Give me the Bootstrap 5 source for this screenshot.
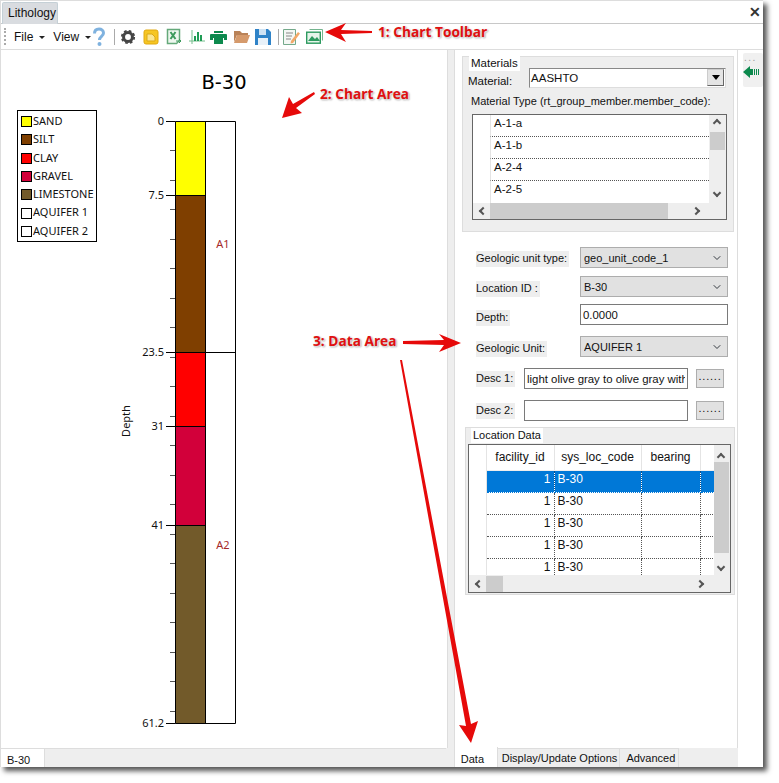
<!DOCTYPE html>
<html lang="en">
<head>
<meta charset="utf-8">
<title>Lithology</title>
<link rel="stylesheet" href="https://cdn.jsdelivr.net/npm/bootstrap@5.3.0/dist/css/bootstrap.min.css">
<style>
html,body{background:#fff;margin:0;height:783px;overflow:hidden}
body{font-family:"Liberation Sans",Arial,sans-serif;font-size:11px;line-height:14px;color:#111}
.win{position:relative;width:763px;height:767px;border:solid #ddd;border-width:1px 0 0 1px;box-shadow:4px 4px 5px #555;background:#fff}
.doc-head{height:23px;border-bottom:1px solid #c8c8c8;padding-left:1px;padding-top:1px}
.doc-tab{width:56px;height:22px;background:#d9dce0;border:1px solid #c5d0d6;border-bottom:0;border-radius:2px 2px 0 0;font-size:12px;line-height:21px;padding-left:5px}
.close-x{font-size:14px;font-weight:700;color:#333;margin-left:auto;margin-right:2px;line-height:20px}
.tool{height:26px;border-bottom:1px solid #ddd;padding-left:3px}
.grip{width:3px;height:17px;border-left:2px dotted #aaa;margin-right:7px}
.menu-i{font-size:12px;color:#111}
.menu-a{width:0;height:0;border:3px solid transparent;border-top:3px solid #222;border-bottom:0;margin:1px 0 0 6px}
.sep-v{width:1px;height:16px;background:#aaa}
.mg1{margin-left:1px}.mg4{margin-left:4px}.mg5{margin-left:5px}.mg6{margin-left:6px}.mg7{margin-left:7px}.mg8{margin-left:8px}.mg9{margin-left:9px}
.body-row{height:698px}
.chart-pane{width:446px;position:relative}
.chart-svg{position:absolute;left:0;top:0}
.split-bar{width:8px;background:#eee;border-left:1px solid #ddd;border-right:1px solid #ddd}
.data-pane{width:283px;border-right:1px solid #ddd;padding:6px 4px 0 7px}
.rail{width:25px;padding:3px 0 0 5px}
.rail-tab{width:20px;height:34px;background:#f0f0f0;border-radius:2px;padding-top:1px}
.rail-dots{color:#999;font-size:10px;line-height:8px;letter-spacing:1.5px;padding-left:1px;height:9px}
.rail-tab svg{display:block;margin-top:2px}
.grp{position:relative;background:#eee;border:1px solid #ddd}
.grp-a{height:176px;width:272px;padding:11px 0 0 5px}
.grp-t{position:absolute;left:6px;top:0;background:#fff;padding:0 2px;line-height:15px;z-index:1;font-size:11.5px}
.grp-a .grp-t{top:-1px}
.mat-l{font-size:11.5px}
.combo{width:197px;height:20px;background:#fff;border:1px solid #888;border-right-color:#ddd;border-bottom-color:#ddd;margin-left:17px;padding:0 1px;line-height:18px;font-size:11.5px}
.combo-btn{width:17px;height:17px;border:1px solid #666;border-left-color:#ccc;border-top-color:#ccc;background:#e4e4e4}
.tri{width:0;height:0;border:4px solid transparent;border-top:5px solid #000;border-bottom:0}
.type-lbl{margin:6px 0 0 3px;line-height:15px;white-space:nowrap}
.lst{width:255px;height:106px;margin:5px 0 0 4px;border:1px solid #666;background:#eee;position:relative}
.lst-body{width:236px;height:88px;background:#fff;padding-left:17px;overflow:hidden}
.lst-row{height:22px;border-left:1px solid #e4e4e4;border-bottom:1px dotted #555;padding:0 0 0 3px;line-height:16px;font-size:11.5px}
.lst-row:last-child{border-bottom:0}
.vbar{position:absolute;right:0;top:0;width:16px;background:#eee}
.thumb-v{position:absolute;left:0;width:15px;background:#ccc}
.hbar{position:absolute;left:0;bottom:0;right:0;height:16px;background:#eee}
.thumb-h{position:absolute;top:0;height:16px;background:#ccc}
.chv{position:absolute;width:6px;height:6px;border:solid #555;border-width:2px 0 0 2px}
.chv-u{transform:rotate(45deg);left:4px}
.chv-d{transform:rotate(225deg);left:4px}
.chv-l{transform:rotate(-45deg);left:7px;top:5px}
.chv-r{transform:rotate(135deg);right:27px;top:5px}
.up1{top:5px}.dn1{top:75px}.up2{top:9px}.dn2{top:119px}
.fm{margin-left:14px}
.fm-lbl{background:#eee;height:16px;line-height:15px;padding:0 2px 0 0;display:inline-block;white-space:nowrap}
.fm-row1{height:21px;margin-top:8px}
.fm-t1{margin-top:15px}.fm-t2{margin-top:7px}.fm-t3{margin-top:11px}.fm-w{width:248px}
.lb-a{margin-top:3px}.lb-b{align-self:flex-end}.lb-c{align-self:flex-end;margin-bottom:-1px}
.pick.form-select{width:148px;height:21px;min-height:0;padding:0 20px 0 3px;border:1px solid #adadad;border-radius:0;background-color:#e1e1e1;font-size:11px;line-height:18px;color:#111;background-size:10px 8px;background-position:right 5px center;margin-left:auto}
.box-i.form-control{height:21px;min-height:0;padding:0 2px;border:1px solid #7a7a7a;border-radius:0;font-size:11.4px;line-height:18px;color:#111;font-family:inherit}
.w148{width:148px;margin-left:auto}
.w164{width:164px;margin-left:auto}
.dotbtn.btn{width:28px;height:19px;padding:0 0 6px;margin-left:8px;border:1px solid #adadad;border-radius:0;background:#e1e1e1;font-size:11px;line-height:6px;color:#111;letter-spacing:.8px;vertical-align:top}
.fm-end{width:252px}
.grp-b{width:270px;height:168px;margin-top:6px;margin-left:3px;padding:16px 0 0 2px}
.grp-b .grp-t{left:5px;top:0;font-size:11px}
.grid-b{width:263px;height:149px;border:1px solid #666;background:#eee;position:relative;overflow:hidden}
.grid-body{width:245px;height:130px;overflow:hidden;background:#fff}
.tb{table-layout:fixed;width:245px;margin:0;border-collapse:collapse;font-size:12px;color:#111}
.tb th,.tb td{padding:0 3px;height:22px;font-weight:400;border-bottom:1px dotted #555;border-right:1px dotted #555;line-height:16px;vertical-align:top;white-space:nowrap;overflow:hidden;background:#fff;box-shadow:none;color:#111}
.tb th{height:25px;border-bottom:1px solid #eee;border-right:1px solid #e4e4e4;text-align:center;vertical-align:middle}
.tb .gut{border:0;border-right:1px solid #e4e4e4;padding:0}
.tb .sel td{background:#0078d7;color:#fff;border-bottom-color:#0078d7;border-right-color:#0a4f8a}
.tb .sel .gut{background:#fff;border-right-color:#e4e4e4}
.tb .num{text-align:right}
.foot-bar{height:19px;background:#eee}
.foot-l{width:446px;border-top:1px solid #ddd}
.tabx{height:100%;line-height:17px;border-right:1px solid #ddd;white-space:nowrap}
.tabx.on{background:#fff}
.tabx-b{width:44px;padding-left:6px;padding-top:3px}
.tabx-d{width:44px;padding:4px 0 0 6px;margin-top:-1px;height:20px;border-left:1px solid #ddd}
.tabx-f{width:123px;padding:1px 0 0 4px;background:#eee;border-top:1px solid #ddd}
.tabx-a{width:59px;padding:1px 0 0 6px;border-top:1px solid #ddd;background:#eee}
.foot-gap{width:8px;background:#eee}
.foot-rest{width:59px;background:#eee}
.foot-w{width:25px;background:#fff}
.lay{position:absolute;left:-1px;top:-1px;pointer-events:none;z-index:5}
.note{position:absolute;color:#e01010;font-family:"Open Sans","Liberation Sans",sans-serif;font-weight:700;font-size:13.700px;line-height:16px;white-space:nowrap;text-shadow:1px 1px 0 #ddd,1px 1px 2px #888;z-index:6}
.n1{left:377px;top:23px}
.n2{left:319px;top:85px}
.n3{left:312px;top:332px}
.tick-t{font:11px "Noto Sans","Liberation Sans",sans-serif;fill:#111}
.red-t{fill:#a52a2a}
.ttl{font:19.500px "DejaVu Sans",sans-serif;fill:#000}
</style>
</head>
<body>
<div class="win d-flex flex-column">
  <div class="doc-head d-flex">
    <div class="doc-tab">Lithology</div>
    <div class="close-x">&#10005;</div>
  </div>
  <div class="tool d-flex align-items-center">
    <span class="grip"></span>
    <span class="menu-i">File</span><span class="menu-a"></span>
    <span class="menu-i mg8">View</span><span class="menu-a"></span>
    <svg class="mg1" width="14" height="20" viewBox="0 0 14 20"><path d="M2.500 6.500C2.500 3.500 4.500 2 7 2s4.500 1.600 4.500 4c0 3.400-4 3.400-4 7" fill="none" stroke="#7fb2df" stroke-width="3"/><circle cx="7.500" cy="17" r="2" fill="#7fb2df"/></svg>
    <span class="sep-v mg8"></span>
    <svg class="mg5" width="16" height="16" viewBox="0 0 18 18"><circle cx="9" cy="9" r="5" fill="none" stroke="#454545" stroke-width="3.400"/><circle cx="9" cy="9" r="7" fill="none" stroke="#454545" stroke-width="2" stroke-dasharray="3 2.500"/></svg>
    <svg class="mg7" width="16" height="16" viewBox="0 0 16 16"><rect x="1" y="1" width="14" height="14" rx="2" fill="#f6c623" stroke="#e0a810"/><path d="M4 5h5l3 3v4H4z" fill="#fbe690" stroke="#dba818"/></svg>
    <svg class="mg7" width="16" height="17" viewBox="0 0 16 17"><path d="M1.500 1.500h12v11l-3 3h-9z" fill="#eef7ef" stroke="#64a97a" stroke-width="1.500"/><path d="M4.500 4l5 7M9.500 4l-5 7" stroke="#3d9a5c" stroke-width="2"/><path d="M10 13h5M13 11l2 2-2 2" stroke="#3d9a5c" fill="none"/></svg>
    <svg class="mg7" width="16" height="16" viewBox="0 0 16 16"><path d="M3 1v14M0 12h16" stroke="#74bd8b"/><path d="M5 7h2v5H5zM8 3h2v9H8zM11 6h2v6h-2z" fill="#1f9c55"/></svg>
    <svg class="mg5" width="17" height="16" viewBox="0 0 17 16"><path d="M1 5h15q1 0 1 1v5h-3V9H3v2H0V6q0-1 1-1zM4 2h9v2H4z" fill="#0d8a4e"/><path d="M4 9h9v6H4z" fill="#0d8a4e"/></svg>
    <svg class="mg6" width="17" height="15" viewBox="0 0 17 15"><path d="M1 2h6l2 2h6v2H4L1 13z" fill="#b98258"/><path d="M4 6h13l-3 8H1z" fill="#d59a6c"/></svg>
    <svg class="mg5" width="16" height="16" viewBox="0 0 16 16"><path d="M0 0h13l3 3v13H0z" fill="#2f83c8"/><path d="M4 0h7v6H4z" fill="#cfe3f4"/><path d="M3 9h10v7H3z" fill="#e8f1f9"/></svg>
    <span class="sep-v mg7"></span>
    <svg class="mg4" width="17" height="17" viewBox="0 0 17 17"><path d="M.5 1.500h12v15H.5z" fill="#f4f7f4" stroke="#74a98b"/><path d="M3 5h7M3 8h6M3 11h5" stroke="#888"/><path d="M8 13L15 4l2 1.500L10 15l-2.500.5z" fill="#f2a868"/></svg>
    <svg class="mg6" width="17" height="15" viewBox="0 0 17 15"><path d="M3.500.5h13v11" fill="none" stroke="#74b48e"/><rect x=".7" y="3.200" width="13.600" height="11" fill="#e6f4ea" stroke="#2c9a5f" stroke-width="1.400"/><path d="M2 12l4-5 3 3 2-2 3 4z" fill="#2c9a5f"/></svg>
  </div>
  <div class="body-row d-flex">
    <div class="chart-pane">
      <svg class="chart-svg" width="446" height="698" viewBox="0 0 446 698">
        <g transform="translate(-1,-50)">
          <text class="ttl" x="224" y="89" text-anchor="middle">B-30</text>
          <rect x="17.500" y="110.500" width="79" height="131" fill="#fff" stroke="#000"/>
          <g stroke="#000">
            <rect x="21.500" y="116.500" width="10" height="10" fill="#ffff00"/>
            <rect x="21.500" y="134.500" width="10" height="10" fill="#7f3f00"/>
            <rect x="21.500" y="153.500" width="10" height="10" fill="#ff0000"/>
            <rect x="21.500" y="171.500" width="10" height="10" fill="#d2003a"/>
            <rect x="21.500" y="189.500" width="10" height="10" fill="#725a2a"/>
            <rect x="21.500" y="208.500" width="10" height="10" fill="#fff"/>
            <rect x="21.500" y="226.500" width="10" height="10" fill="#fff"/>
          </g>
          <g class="tick-t">
            <text x="33" y="125">SAND</text><text x="33" y="143">SILT</text><text x="33" y="162">CLAY</text><text x="33" y="180">GRAVEL</text><text x="33" y="198">LIMESTONE</text><text x="33" y="216">AQUIFER 1</text><text x="33" y="235">AQUIFER 2</text>
          </g>
          <rect x="175.500" y="121.500" width="30" height="74" fill="#ffff00"/>
          <rect x="175.500" y="195.500" width="30" height="157" fill="#7f3f00"/>
          <rect x="175.500" y="352.500" width="30" height="74" fill="#ff0000"/>
          <rect x="175.500" y="426.500" width="30" height="99" fill="#d2003a"/>
          <rect x="175.500" y="525.500" width="30" height="198" fill="#725a2a"/>
          <path d="M175.500 121.500h60v602h-60zM205.500 121.500v602M175.500 195.500h30M175.500 352.500h60M175.500 426.500h30M175.500 525.500h30" fill="none" stroke="#000"/>
          <path d="M166 121.500h9.500M166 195.500h9.500M166 352.500h9.500M166 426.500h9.500M166 525.500h9.500M166 723.500h9.500" stroke="#000"/>
          <path d="M170 150.500h5M170 180.500h5M170 209.500h5M170 239.500h5M170 268.500h5M170 298.500h5M170 327.500h5M170 357.500h5M170 386.500h5M170 416.500h5M170 445.500h5M170 475.500h5M170 504.500h5M170 534.500h5M170 563.500h5M170 593.500h5M170 622.500h5M170 652.500h5M170 681.500h5M170 711.500h5" stroke="#555"/>
          <g class="tick-t" text-anchor="end">
            <text x="164" y="125">0</text><text x="164" y="199">7.5</text><text x="164" y="356">23.5</text><text x="164" y="430">31</text><text x="164" y="529">41</text><text x="164" y="727">61.2</text>
          </g>
          <text class="tick-t" transform="translate(130,421) rotate(-90)" text-anchor="middle">Depth</text>
          <text class="tick-t red-t" x="223" y="248" text-anchor="middle">A1</text>
          <text class="tick-t red-t" x="223" y="549" text-anchor="middle">A2</text>
        </g>
      </svg>
    </div>
    <div class="split-bar"></div>
    <div class="data-pane">
      <div class="grp grp-a">
        <div class="grp-t">Materials</div>
        <div class="d-flex align-items-end">
          <span class="mat-l">Material:</span>
          <div class="combo d-flex justify-content-between">
            <span>AASHTO</span>
            <span class="combo-btn d-flex align-items-center justify-content-center"><span class="tri"></span></span>
          </div>
        </div>
        <div class="type-lbl">Material Type (rt_group_member.member_code):</div>
        <div class="lst">
          <div class="lst-body">
            <div class="lst-row">A-1-a</div>
            <div class="lst-row">A-1-b</div>
            <div class="lst-row">A-2-4</div>
            <div class="lst-row">A-2-5</div>
          </div>
          <div class="vbar" style="height:88px"><span class="chv chv-u up1"></span><div class="thumb-v" style="top:17px;height:18px"></div><span class="chv chv-d dn1"></span></div>
          <div class="hbar"><div class="thumb-h" style="left:17px;width:178px"></div><span class="chv chv-l"></span><span class="chv chv-r"></span></div>
        </div>
      </div>
      <div class="fm fm-end">
        <div class="fm-row1 fm-t1 d-flex align-items-center"><span class="fm-lbl lb-a">Geologic unit type:</span><select class="pick form-select" aria-label="Geologic unit type"><option>geo_unit_code_1</option></select></div>
        <div class="fm-row1 d-flex align-items-center"><span class="fm-lbl lb-b">Location ID :</span><select class="pick form-select" aria-label="Location ID"><option>B-30</option></select></div>
        <div class="fm-row1 fm-t2 d-flex align-items-center"><span class="fm-lbl lb-c">Depth:</span><input class="box-i form-control w148" value="0.0000" aria-label="Depth"></div>
        <div class="fm-row1 fm-t3 d-flex align-items-center"><span class="fm-lbl lb-b">Geologic Unit:</span><select class="pick form-select" aria-label="Geologic Unit"><option>AQUIFER 1</option></select></div>
        <div class="fm-row1 fm-t3 fm-w d-flex align-items-center"><span class="fm-lbl">Desc 1:</span><input class="box-i form-control w164" value="light olive gray to olive gray with" aria-label="Desc 1"><button class="dotbtn btn" type="button">......</button></div>
        <div class="fm-row1 fm-t3 fm-w d-flex align-items-center"><span class="fm-lbl">Desc 2:</span><input class="box-i form-control w164" aria-label="Desc 2"><button class="dotbtn btn" type="button">......</button></div>
      </div>
      <div class="grp grp-b">
        <div class="grp-t">Location Data</div>
        <div class="grid-b">
          <div class="grid-body">
            <table class="table tb">
              <colgroup><col style="width:17px"><col style="width:68px"><col style="width:87px"><col style="width:59px"><col style="width:14px"></colgroup>
              <thead><tr><th class="gut"></th><th>facility_id</th><th>sys_loc_code</th><th>bearing</th><th></th></tr></thead>
              <tbody>
                <tr class="sel"><td class="gut"></td><td class="num">1</td><td>B-30</td><td></td><td></td></tr>
                <tr><td class="gut"></td><td class="num">1</td><td>B-30</td><td></td><td></td></tr>
                <tr><td class="gut"></td><td class="num">1</td><td>B-30</td><td></td><td></td></tr>
                <tr><td class="gut"></td><td class="num">1</td><td>B-30</td><td></td><td></td></tr>
                <tr><td class="gut"></td><td class="num">1</td><td>B-30</td><td></td><td></td></tr>
              </tbody>
            </table>
          </div>
          <div class="vbar" style="height:131px"><span class="chv chv-u up2"></span><div class="thumb-v" style="top:17px;height:91px"></div><span class="chv chv-d dn2"></span></div>
          <div class="hbar"><div class="thumb-h" style="left:17px;width:17px"></div><span class="chv chv-l"></span><span class="chv chv-r"></span></div>
        </div>
      </div>
    </div>
    <div class="rail">
      <div class="rail-tab">
        <div class="rail-dots">...</div>
        <svg width="17" height="14" viewBox="0 0 17 14"><path d="M0 7l7-6v3h3v6H7v3z" fill="#0d8a4e"/><path d="M11.500 4v6M13.500 4v6M15.500 4v6" stroke="#0d8a4e"/></svg>
      </div>
    </div>
  </div>
  <div class="foot-bar d-flex">
    <div class="foot-l d-flex"><div class="tabx on tabx-b">B-30</div></div>
    <div class="foot-gap"></div>
    <div class="tabx on tabx-d">Data</div>
    <div class="tabx tabx-f">Display/Update Options</div>
    <div class="tabx tabx-a">Advanced</div>
    <div class="foot-rest"></div>
    <div class="foot-w"></div>
  </div>
  <svg class="lay" width="763" height="767" viewBox="0 0 763 767">
    <g fill="#e60a0a">
      <path d="M325 32l21-9-5 7 31 1v2l-31 1 5 8z"/>
      <path d="M282 118l7-21 4 7 21-12 1 2-19 14 6 5z"/>
      <path d="M461 343l-22-9 5 6-41 1v3l41 1-5 7z"/>
      <path d="M471 743l-12-18 7 1-66-366h2l69 364 7-3z"/>
    </g>
  </svg>
  <div class="note n1">1: Chart Toolbar</div>
  <div class="note n2">2: Chart Area</div>
  <div class="note n3">3: Data Area</div>
</div>
<script src="https://cdn.jsdelivr.net/npm/bootstrap@5.3.0/dist/js/bootstrap.bundle.min.js"></script>
</body>
</html>
